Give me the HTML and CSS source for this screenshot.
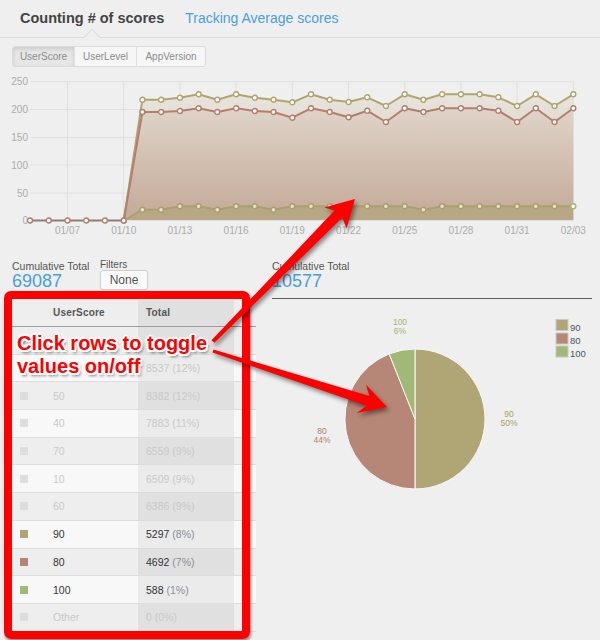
FILE: index.html
```html
<!DOCTYPE html>
<html>
<head>
<meta charset="utf-8">
<title>Counting # of scores</title>
<link rel="stylesheet" href="styles.css">
</head>
<body>
<div class="page">
  <div class="topnav">
    <div class="nav-item active">Counting # of scores</div>
    <div class="nav-item link">Tracking Average scores</div>
  </div>

  <div class="btn-group">
    <span class="btn btn-score pressed">UserScore</span>
    <span class="btn btn-level">UserLevel</span>
    <span class="btn btn-app">AppVersion</span>
  </div>

  <svg class="line-chart" width="600" height="173" viewBox="0 67 600 173">
    <defs>
      <linearGradient id="gTop" x1="0" y1="94" x2="0" y2="122" gradientUnits="userSpaceOnUse">
        <stop offset="0" stop-color="#e8e5dd"/>
        <stop offset="1" stop-color="#e2dcd2"/>
      </linearGradient>
      <linearGradient id="gMid" x1="0" y1="108" x2="0" y2="210" gradientUnits="userSpaceOnUse">
        <stop offset="0" stop-color="#dfd4c9"/>
        <stop offset="1" stop-color="#c5ad9b"/>
      </linearGradient>
      <marker id="mOlive" markerWidth="8" markerHeight="8" refX="4" refY="4" markerUnits="userSpaceOnUse">
        <circle cx="4" cy="4" r="2.5" fill="#fff" stroke="#b0a46f" stroke-width="1.4"/>
      </marker>
      <marker id="mRed" markerWidth="8" markerHeight="8" refX="4" refY="4" markerUnits="userSpaceOnUse">
        <circle cx="4" cy="4" r="2.5" fill="#fff" stroke="#b47d6e" stroke-width="1.4"/>
      </marker>
      <marker id="mLow" markerWidth="8" markerHeight="8" refX="4" refY="4" markerUnits="userSpaceOnUse">
        <circle cx="4" cy="4" r="2.5" fill="#e4dfcc" stroke="#a99e6c" stroke-width="1.4"/>
      </marker>
      <marker id="mGreen" markerWidth="8" markerHeight="8" refX="4" refY="4" markerUnits="userSpaceOnUse">
        <circle cx="4" cy="4" r="2.5" fill="#fff" stroke="#9fba74" stroke-width="1.4"/>
      </marker>
    </defs>

    <g class="grid-lines">
      <line x1="30" y1="81.7" x2="574" y2="81.7"/>
      <line x1="30" y1="109.5" x2="574" y2="109.5"/>
      <line x1="30" y1="137.5" x2="574" y2="137.5"/>
      <line x1="30" y1="165" x2="574" y2="165"/>
      <line x1="30" y1="193" x2="574" y2="193"/>
      <line x1="67.5" y1="81.7" x2="67.5" y2="220.5"/>
      <line x1="123.7" y1="81.7" x2="123.7" y2="220.5"/>
      <line x1="179.9" y1="81.7" x2="179.9" y2="220.5"/>
      <line x1="236.1" y1="81.7" x2="236.1" y2="220.5"/>
      <line x1="292.3" y1="81.7" x2="292.3" y2="220.5"/>
      <line x1="348.5" y1="81.7" x2="348.5" y2="220.5"/>
      <line x1="404.7" y1="81.7" x2="404.7" y2="220.5"/>
      <line x1="460.9" y1="81.7" x2="460.9" y2="220.5"/>
      <line x1="517.1" y1="81.7" x2="517.1" y2="220.5"/>
      <line x1="573.3" y1="81.7" x2="573.3" y2="220.5"/>
    </g>

    <g class="y-labels">
      <text x="28" y="85">250</text>
      <text x="28" y="113">200</text>
      <text x="28" y="141">150</text>
      <text x="28" y="168.5">100</text>
      <text x="28" y="196.5">50</text>
      <text x="28" y="224">0</text>
    </g>

    <polygon fill="url(#gTop)" points="123.7,220.5 142.4,99.7 161.1,99.7 179.9,97.7 198.6,94.3 217.3,99.7 236.1,94.3 254.8,97.7 273.5,99.7 292.3,102.3 311,94.3 329.7,99.7 348.5,102 367.2,97.3 385.9,106 404.7,94.3 423.4,99.7 442.1,94.3 460.9,94.3 479.6,94.3 498.3,97.3 517.1,106 535.8,94.3 554.5,106 573.3,94.3 573.3,108.3 554.5,122 535.8,108.3 517.1,122 498.3,110.7 479.6,108.3 460.9,108.3 442.1,108.3 423.4,112 404.7,108.3 385.9,122 367.2,110.7 348.5,117.3 329.7,112 311,108.3 292.3,117.7 273.5,112 254.8,111 236.1,108.3 217.3,112 198.6,108.3 179.9,111 161.1,112 142.4,112"/>
    <polygon fill="url(#gMid)" points="123.7,220.5 142.4,112 161.1,112 179.9,111 198.6,108.3 217.3,112 236.1,108.3 254.8,111 273.5,112 292.3,117.7 311,108.3 329.7,112 348.5,117.3 367.2,110.7 385.9,122 404.7,108.3 423.4,112 442.1,108.3 460.9,108.3 479.6,108.3 498.3,110.7 517.1,122 535.8,108.3 554.5,122 573.3,108.3 573.3,206.3 554.5,206.3 535.8,206.3 517.1,206.3 498.3,206.3 479.6,206.3 460.9,206.3 442.1,206.3 423.4,209.7 404.7,206.3 385.9,206.3 367.2,206.3 348.5,206.3 329.7,206.3 311,206.3 292.3,206.3 273.5,209.7 254.8,206.3 236.1,206.3 217.3,209.7 198.6,206.3 179.9,206.3 161.1,209.7 142.4,209.7"/>
    <polygon fill="#b8a785" points="123.7,220.5 142.4,209.7 161.1,209.7 179.9,206.3 198.6,206.3 217.3,209.7 236.1,206.3 254.8,206.3 273.5,209.7 292.3,206.3 311,206.3 329.7,206.3 348.5,206.3 367.2,206.3 385.9,206.3 404.7,206.3 423.4,209.7 442.1,206.3 460.9,206.3 479.6,206.3 498.3,206.3 517.1,206.3 535.8,206.3 554.5,206.3 573.3,206.3 573.3,220.5"/>

    <line class="axis-base" x1="30" y1="220.5" x2="574" y2="220.5"/>

    <polyline class="s-low" marker-start="url(#mLow)" marker-mid="url(#mLow)" marker-end="url(#mGreen)" points="123.7,220.5 142.4,209.7 161.1,209.7 179.9,206.3 198.6,206.3 217.3,209.7 236.1,206.3 254.8,206.3 273.5,209.7 292.3,206.3 311,206.3 329.7,206.3 348.5,206.3 367.2,206.3 385.9,206.3 404.7,206.3 423.4,209.7 442.1,206.3 460.9,206.3 479.6,206.3 498.3,206.3 517.1,206.3 535.8,206.3 554.5,206.3 573.3,206.3"/>
    <polyline class="s-top" marker-start="url(#mOlive)" marker-mid="url(#mOlive)" marker-end="url(#mOlive)" points="123.7,220.5 142.4,99.7 161.1,99.7 179.9,97.7 198.6,94.3 217.3,99.7 236.1,94.3 254.8,97.7 273.5,99.7 292.3,102.3 311,94.3 329.7,99.7 348.5,102 367.2,97.3 385.9,106 404.7,94.3 423.4,99.7 442.1,94.3 460.9,94.3 479.6,94.3 498.3,97.3 517.1,106 535.8,94.3 554.5,106 573.3,94.3"/>
    <polyline class="s-red" marker-mid="url(#mRed)" marker-end="url(#mRed)" points="123.7,220.5 142.4,112 161.1,112 179.9,111 198.6,108.3 217.3,112 236.1,108.3 254.8,111 273.5,112 292.3,117.7 311,108.3 329.7,112 348.5,117.3 367.2,110.7 385.9,122 404.7,108.3 423.4,112 442.1,108.3 460.9,108.3 479.6,108.3 498.3,110.7 517.1,122 535.8,108.3 554.5,122 573.3,108.3"/>
    <polyline class="s-zero" marker-start="url(#mRed)" marker-mid="url(#mRed)" marker-end="url(#mRed)" points="30,220.5 48.7,220.5 67.5,220.5 86.2,220.5 104.9,220.5 123.7,220.5"/>

    <g class="x-labels">
      <text x="67.5" y="233.5">01/07</text>
      <text x="123.7" y="233.5">01/10</text>
      <text x="179.9" y="233.5">01/13</text>
      <text x="236.1" y="233.5">01/16</text>
      <text x="292.3" y="233.5">01/19</text>
      <text x="348.5" y="233.5">01/22</text>
      <text x="404.7" y="233.5">01/25</text>
      <text x="460.9" y="233.5">01/28</text>
      <text x="517.1" y="233.5">01/31</text>
      <text x="573.3" y="233.5">02/03</text>
    </g>
  </svg>

  <div class="bottom">
    <div class="left">
      <div class="stats">
        <div class="stat">
          <div class="stat-label">Cumulative Total</div>
          <div class="stat-value">69087</div>
        </div>
        <div class="filters">
          <div class="filters-label">Filters</div>
          <button class="filters-btn">None</button>
        </div>
      </div>

      <div class="grid">
        <div class="grid-head">
          <div class="c1 head-label">UserScore</div>
          <div class="c2">Total</div>
          <div class="c3"></div>
        </div>
        <div class="row dark off">
          <div class="c1"><span class="swatch"></span></div>
          <div class="c2"></div>
          <div class="c3"></div>
        </div>
        <div class="row light off">
          <div class="c1"><span class="swatch"></span></div>
          <div class="c2">8537 <span class="pct">(12%)</span></div>
          <div class="c3"></div>
        </div>
        <div class="row dark off">
          <div class="c1"><span class="swatch"></span><span class="label">50</span></div>
          <div class="c2">8382 <span class="pct">(12%)</span></div>
          <div class="c3"></div>
        </div>
        <div class="row light off">
          <div class="c1"><span class="swatch"></span><span class="label">40</span></div>
          <div class="c2">7883 <span class="pct">(11%)</span></div>
          <div class="c3"></div>
        </div>
        <div class="row dark off">
          <div class="c1"><span class="swatch"></span><span class="label">70</span></div>
          <div class="c2">6559 <span class="pct">(9%)</span></div>
          <div class="c3"></div>
        </div>
        <div class="row light off">
          <div class="c1"><span class="swatch"></span><span class="label">10</span></div>
          <div class="c2">6509 <span class="pct">(9%)</span></div>
          <div class="c3"></div>
        </div>
        <div class="row dark off">
          <div class="c1"><span class="swatch"></span><span class="label">60</span></div>
          <div class="c2">6386 <span class="pct">(9%)</span></div>
          <div class="c3"></div>
        </div>
        <div class="row light">
          <div class="c1"><span class="swatch sw-90"></span><span class="label">90</span></div>
          <div class="c2">5297 <span class="pct">(8%)</span></div>
          <div class="c3"></div>
        </div>
        <div class="row dark">
          <div class="c1"><span class="swatch sw-80"></span><span class="label">80</span></div>
          <div class="c2">4692 <span class="pct">(7%)</span></div>
          <div class="c3"></div>
        </div>
        <div class="row light">
          <div class="c1"><span class="swatch sw-100"></span><span class="label">100</span></div>
          <div class="c2">588 <span class="pct">(1%)</span></div>
          <div class="c3"></div>
        </div>
        <div class="row dark off">
          <div class="c1"><span class="swatch"></span><span class="label">Other</span></div>
          <div class="c2">0 <span class="pct">(0%)</span></div>
          <div class="c3"></div>
        </div>
      </div>
    </div>

    <div class="right">
      <div class="right-stat">
        <div class="stat-label">Cumulative Total</div>
        <div class="stat-value">10577</div>
      </div>
      <svg class="pie" width="320" height="341" viewBox="272 299 320 341">
        <g class="slices">
          <path fill="#b0a574" d="M415,419 L415,349 A70,70 0 0 1 415,489 Z"/>
          <path fill="#b68676" d="M415,419 L415,489 A70,70 0 0 1 389.2,353.9 Z"/>
          <path fill="#a1b877" d="M415,419 L389.2,353.9 A70,70 0 0 1 415,349 Z"/>
        </g>
        <g class="pie-labels">
          <text class="pl-100" x="400" y="324.5">100</text>
          <text class="pl-100" x="400" y="333.5">6%</text>
          <text class="pl-90" x="509" y="416.5">90</text>
          <text class="pl-90" x="509" y="425.5">50%</text>
          <text class="pl-80" x="322" y="433.5">80</text>
          <text class="pl-80" x="322" y="442.5">44%</text>
        </g>
        <g class="legend">
          <rect class="lg-box" x="556" y="319.5" width="12" height="11" fill="#b0a574"/>
          <rect class="lg-box" x="556" y="333" width="12" height="11" fill="#b68676"/>
          <rect class="lg-box" x="556" y="346" width="12" height="11" fill="#a1b877"/>
          <text x="570" y="330.5">90</text>
          <text x="570" y="344">80</text>
          <text x="570" y="356.5">100</text>
        </g>
      </svg>
    </div>
  </div>

  <div class="callout-box"></div>
  <div class="callout-text">Click rows to toggle<br>values on/off</div>
  <svg class="arrows" width="600" height="640" viewBox="0 0 600 640">
    <polygon points="211.5,340.2 334.5,210.6 324.3,207.5 355,199 346.5,228.7 342.4,217.6 214.5,342.8"/>
    <polygon points="213.5,349.6 369.5,396.1 365.9,384.4 387,407 356.7,413 366.5,405.7 212.5,352.4"/>
  </svg>
</div>
</body>
</html>
```

FILE: styles.css
```css
body {
  margin: 0;
  background: #efefef;
  font-family: "Liberation Sans", Arial, sans-serif;
}

.page {
  position: relative;
  width: 600px;
  height: 640px;
  overflow: hidden;
}

/* top nav */
.topnav {
  display: flex;
  height: 37px;
  border-bottom: 1px solid #dcdcdc;
  padding-left: 20px;
  gap: 21px;
}

.nav-item {
  font-size: 14px;
  line-height: 37px;
}

.nav-item.active {
  position: relative;
  font-size: 14.5px;
  font-weight: bold;
  color: #444;
}

.nav-item.active::before,
.nav-item.active::after {
  content: "";
  position: absolute;
  left: 50%;
  width: 0;
  height: 0;
  border-style: solid;
  border-color: transparent;
}

.nav-item.active::before {
  bottom: -1px;
  margin-left: -9px;
  border-width: 0 9px 9px 9px;
  border-bottom-color: #d6d6d6;
}

.nav-item.active::after {
  bottom: -1px;
  margin-left: -8px;
  border-width: 0 8px 8px 8px;
  border-bottom-color: #efefef;
}

.nav-item.link {
  color: #4a9fe2;
}

/* button group */
.btn-group {
  display: flex;
  margin: 8px 0 0 12px;
}

.btn {
  box-sizing: border-box;
  height: 21px;
  line-height: 19px;
  border: 1px solid #dcdcdc;
  background: #f6f6f6;
  color: #8c8c8c;
  font-size: 10px;
  text-align: center;
}

.btn + .btn {
  border-left-color: #e2e2e2;
  margin-left: -1px;
}

.btn-score {
  width: 63px;
  border-radius: 3px 0 0 3px;
}

.btn-level {
  width: 63px;
}

.btn-app {
  width: 70px;
  border-radius: 0 3px 3px 0;
}

.btn.pressed {
  background: #e6e6e6;
  box-shadow: inset 0 2px 4px rgba(0, 0, 0, 0.12);
}

/* line chart */
.line-chart {
  display: block;
}

.grid-lines line {
  stroke: #e0e0e0;
  stroke-width: 1;
}

.y-labels text {
  font-size: 10px;
  fill: #ababab;
  text-anchor: end;
}

.x-labels text {
  font-size: 10px;
  fill: #ababab;
  text-anchor: middle;
}

.axis-base {
  stroke: #e0e0e0;
  stroke-width: 1;
}

.s-top,
.s-red,
.s-low,
.s-zero {
  fill: none;
  stroke-width: 2;
  stroke-linejoin: round;
}

.s-top { stroke: #b1a56f; }
.s-red { stroke: #b47d6e; }
.s-low { stroke: #aaa06d; }
.s-zero { stroke: #8d7f76; }

/* bottom area */
.bottom {
  display: flex;
  gap: 16px;
  padding: 20px 8px 0 12px;
}

.left {
  width: 244px;
}

.stats {
  display: flex;
  height: 40px;
}

.stat {
  width: 88px;
}

.stat-label {
  font-size: 10.5px;
  line-height: 13px;
  color: #555;
}

.stat-value {
  font-size: 18px;
  line-height: 17px;
  color: #4a9de0;
}

.filters-label {
  font-size: 10px;
  line-height: 10px;
  color: #555;
}

.filters-btn {
  display: block;
  box-sizing: border-box;
  width: 48px;
  height: 20px;
  padding: 0;
  border: 1px solid #cfcfcf;
  border-radius: 3px;
  background: #fafafa;
  color: #555;
  font: 12px "Liberation Sans", Arial, sans-serif;
}

/* table */
.grid {
  width: 244px;
  font-size: 10.5px;
}

.grid-head,
.row {
  display: flex;
  box-sizing: border-box;
}

.grid-head {
  height: 27px;
  border-bottom: 1px solid #9c9c9c;
  align-items: stretch;
  font-size: 10px;
  font-weight: bold;
  color: #555;
  letter-spacing: 0.2px;
}

.grid-head .c1,
.grid-head .c2 {
  line-height: 26px;
}

.head-label {
  padding-left: 41px;
}

.c1 {
  box-sizing: border-box;
  width: 126px;
  display: flex;
  align-items: center;
}

.c2 {
  box-sizing: border-box;
  width: 96px;
  padding-left: 8px;
  display: flex;
  align-items: center;
  gap: 3px;
}

.c3 {
  width: 22px;
}

.grid-head .c1 { background: #eeeeee; }
.grid-head .c2 { background: #e0e0e0; }
.grid-head .c3 { background: #eeeeee; }

.row {
  height: 27.7px;
  border-bottom: 1px solid #dddddd;
  color: #333;
}

.row.dark .c1,
.row.dark .c3 { background: #eeeeee; }
.row.dark .c2 { background: #e0e0e0; }

.row.light .c1,
.row.light .c3 { background: #f8f8f8; }
.row.light .c2 { background: #ebebeb; }

.swatch {
  width: 8px;
  height: 8px;
  margin-left: 8px;
  background: #dddddd;
}

.label {
  margin-left: 25px;
}

.pct {
  color: #8a8f96;
}

.row.off,
.row.off .pct {
  color: #c9c9c9;
}

.sw-90 { background: #b0a574; }
.sw-80 { background: #b68474; }
.sw-100 { background: #9fba74; }

/* right column */
.right {
  width: 320px;
}

.right-stat {
  padding-bottom: 8px;
  border-bottom: 1px solid #5a5f68;
}

.pie {
  display: block;
}

.slices path {
  stroke: #fafafa;
  stroke-width: 1;
}

.pie-labels text {
  font-size: 8.5px;
  text-anchor: middle;
}

.pl-100 { fill: #a3b36f; }
.pl-90 { fill: #ab9f66; }
.pl-80 { fill: #b07e70; }

.lg-box {
  stroke: #c9c9c9;
  stroke-width: 1;
}

.legend text {
  font-size: 9.5px;
  fill: #4b5566;
}

/* annotation overlay */
.callout-box {
  position: absolute;
  left: 4px;
  top: 291px;
  width: 246px;
  height: 348px;
  box-sizing: border-box;
  border: 8px solid #ff0000;
  border-radius: 7px;
  box-shadow: 1px 2px 3px rgba(0, 0, 0, 0.45);
}

.callout-text {
  position: absolute;
  left: 17px;
  top: 331.5px;
  font-size: 20px;
  line-height: 23px;
  font-weight: bold;
  color: #ff0000;
  white-space: nowrap;
  text-shadow:
    -1.5px -1.5px 0 #fff,
    1.5px -1.5px 0 #fff,
    -1.5px 1.5px 0 #fff,
    1.5px 1.5px 0 #fff,
    0 -2px 0 #fff,
    0 2px 0 #fff,
    -2px 0 0 #fff,
    2px 0 0 #fff,
    2px 3px 3px rgba(0, 0, 0, 0.55);
}

.arrows {
  position: absolute;
  left: 0;
  top: 0;
  pointer-events: none;
}

.arrows polygon {
  fill: #ff0000;
  filter: drop-shadow(2px 3px 2px rgba(0, 0, 0, 0.45));
}
```
